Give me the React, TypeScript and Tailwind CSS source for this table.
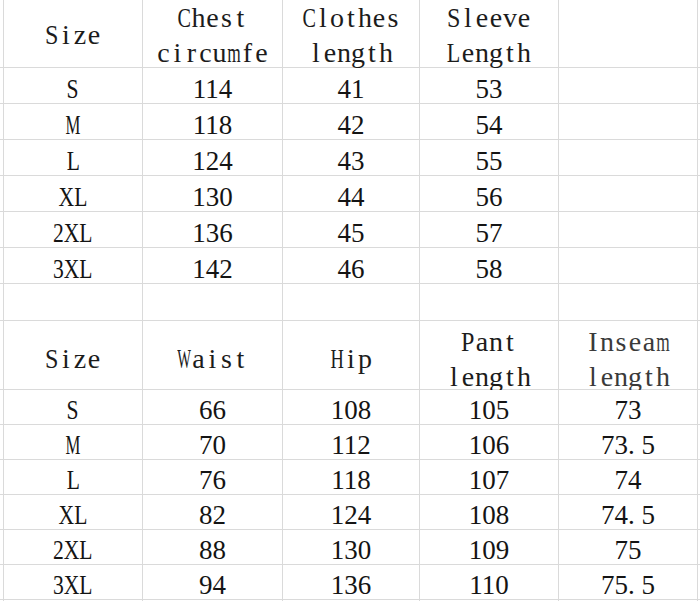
import React from "react";

type Cell = { kind: "blank" } | { kind: "head"; lines: string[]; light?: boolean } | { kind: "data"; text: string; label?: boolean };

const B: Cell = { kind: "blank" };
const H = (lines: string[], light = false): Cell => ({ kind: "head", lines, light });
const D = (text: string): Cell => ({ kind: "data", text });
const L = (text: string): Cell => ({ kind: "data", text, label: true });

const top: Cell[][] = [
  [H(["Size"]), H(["Chest", "circumfe"]), H(["Clothes", "length"]), H(["Sleeve", "Length"]), B],
  [L("S"), D("114"), D("41"), D("53"), B],
  [L("M"), D("118"), D("42"), D("54"), B],
  [L("L"), D("124"), D("43"), D("55"), B],
  [L("XL"), D("130"), D("44"), D("56"), B],
  [L("2XL"), D("136"), D("45"), D("57"), B],
  [L("3XL"), D("142"), D("46"), D("58"), B],
];

const bottom: Cell[][] = [
  [H(["Size"]), H(["Waist"]), H(["Hip"]), H(["Pant", "length"]), H(["Inseam", "length"], true)],
  [L("S"), D("66"), D("108"), D("105"), D("73")],
  [L("M"), D("70"), D("112"), D("106"), D("73.5")],
  [L("L"), D("76"), D("118"), D("107"), D("74")],
  [L("XL"), D("82"), D("124"), D("108"), D("74.5")],
  [L("2XL"), D("88"), D("130"), D("109"), D("75")],
  [L("3XL"), D("94"), D("136"), D("110"), D("75.5")],
];

function Num({ text }: { text: string }) {
  const i = text.indexOf(".");
  if (i < 0) return <>{text}</>;
  return (
    <>
      {text.slice(0, i)}
      <span className="inline-block w-[0.5em] text-left">.</span>
      {text.slice(i + 1)}
    </>
  );
}

const SCALE: Record<string, string> = {
  C: "scale-x-[0.72]",
  S: "scale-x-[0.86]",
  W: "scale-x-[0.52]",
  H: "scale-x-[0.66]",
  P: "scale-x-[0.86]",
  L: "scale-x-[0.79]",
  m: "scale-x-[0.62]",
  w: "scale-x-[0.66]",
};

function MonoWord({ word }: { word: string }) {
  return (
    <div className="whitespace-nowrap flex">
      {word.split("").map((ch, i) => (
        <span key={i} className="inline-flex w-[0.5em] justify-center">
          <span className={"inline-block shrink-0 " + (SCALE[ch] ?? "")}>{ch}</span>
        </span>
      ))}
    </div>
  );
}

function CellView({ cell, bottomHead }: { cell: Cell; bottomHead?: boolean }) {
  if (cell.kind === "blank") return <div className="bg-white" />;
  if (cell.kind === "head") {
    return (
      <div
        className={
          "bg-white flex flex-col items-center justify-center font-['Liberation_Serif',serif] text-[28px] leading-[35px] " +
          (bottomHead ? "pt-[7px] " : "pt-[2px] ") +
          (cell.light ? "text-[#3a3a3a]" : "text-[#1c1c1c]")
        }
      >
        {cell.lines.map((l) => (
          <MonoWord key={l} word={l} />
        ))}
      </div>
    );
  }
  return (
    <div className="bg-white flex items-center justify-center pt-[7px] font-['Liberation_Serif',serif] text-[27px] leading-[35px] text-[#141414]">
      {cell.label ? (
        <span className={"inline-block whitespace-nowrap " + (cell.text === "M" ? "scale-x-[0.62]" : "scale-x-[0.8]")}>
          {cell.text}
        </span>
      ) : (
        <span className="whitespace-nowrap">
          <Num text={cell.text} />
        </span>
      )}
    </div>
  );
}

export default function App() {
  const rows: { cells: Cell[]; bh?: boolean }[] = [];
  top.forEach((r) => rows.push({ cells: r }));
  rows.push({ cells: [B, B, B, B, B] });
  bottom.forEach((r, i) => rows.push({ cells: r, bh: i === 0 }));
  rows.push({ cells: [B, B, B, B, B] });

  return (
    <div className="w-[700px] h-[601px] overflow-hidden bg-white">
      <div className="grid w-[700px] h-[601px] gap-px bg-[#dadada] grid-cols-[3px_138px_139px_136px_138px_138px_1fr] grid-rows-[67px_repeat(6,35px)_36px_68px_repeat(6,34px)_1fr]">
        {rows.map((row, ri) => (
          <React.Fragment key={ri}>
            <div className="bg-white" />
            {row.cells.map((c, ci) => (
              <CellView key={ci} cell={c} bottomHead={row.bh} />
            ))}
            <div className="bg-white" />
          </React.Fragment>
        ))}
      </div>
    </div>
  );
}
